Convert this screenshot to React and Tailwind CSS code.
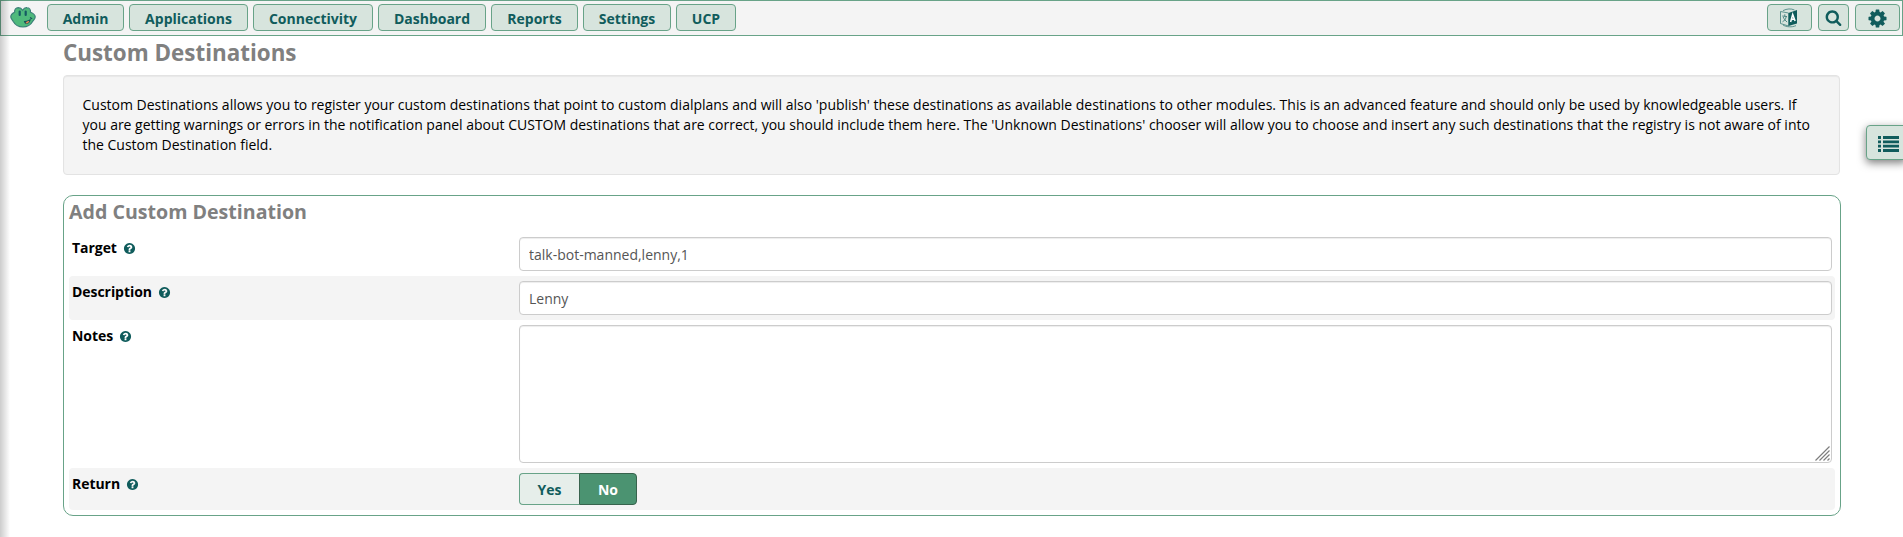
import React from "react";

const GEAR =
  "M1152 896q0-106-75-181t-181-75-181 75-75 181 75 181 181 75 181-75 75-181zm512-109v222q0 12-8 23t-20 13l-185 28q-19 54-39 91 35 50 107 138 10 12 10 25t-9 23q-27 37-99 108t-94 71q-12 0-26-9l-138-108q-44 23-91 38-16 136-29 186-7 28-36 28h-222q-14 0-24.500-8.500t-11.500-21.500l-28-184q-49-16-90-37l-141 107q-10 9-25 9-14 0-25-11-126-114-165-168-7-10-7-23 0-12 8-23 15-21 51-66.500t54-70.500q-27-50-41-99l-183-27q-13-2-21-12.500t-8-23.500v-222q0-12 8-23t19-13l186-28q14-46 39-92-40-57-107-138-10-12-10-24 0-10 9-23 26-36 98.500-107.500t94.500-71.500q13 0 26 10l138 107q44-23 91-38 16-136 29-186 7-28 36-28h222q14 0 24.500 8.500t11.500 21.500l28 184q49 16 90 37l142-107q9-9 24-9 13 0 25 10 129 119 165 170 7 8 7 22 0 12-8 23-15 21-51 66.500t-54 70.500q26 50 41 98l183 28q13 2 21 12.500t8 23.500z";
const SEARCH =
  "M1216 832q0-185-131.500-316.500t-316.500-131.500-316.500 131.500-131.500 316.500 131.500 316.500 316.500 131.500 316.500-131.500 131.500-316.500zm512 832q0 52-38 90t-90 38q-54 0-90-38l-343-342q-179 124-399 124-143 0-273.500-55.500t-225-150-150-225-55.500-273.500 55.500-273.500 150-225 225-150 273.500-55.500 273.500 55.500 225 150 150 225 55.500 273.500q0 220-124 399l343 343q37 37 37 90z";
const HELP =
  "M1024 1376v-192q0-14-9-23t-23-9h-192q-14 0-23 9t-9 23v192q0 14 9 23t23 9h192q14 0 23-9t9-23zm256-672q0-88-55.500-163t-138.500-116-170-41q-243 0-371 213-15 24 8 42l132 100q7 6 19 6 16 0 25-12 53-68 86-92 34-24 86-24 48 0 85.500 26t37.500 59q0 38-20 61t-68 45q-63 28-115.500 86.500t-52.500 125.500v36q0 14 9 23t23 9h192q14 0 23-9t9-23q0-19 21.500-49.500t54.500-49.500q32-18 49-28.500t46-35 44.500-48 28-60.500 12.500-81zm384 192q0 209-103 385.500t-279.500 279.500-385.500 103-385.500-103-279.500-279.500-103-385.500 103-385.500 279.500-279.500 385.500-103 385.500 103 279.500 279.500 103 385.500z";

function Glyph({ d, className }) {
  return (
    <svg viewBox="0 0 1792 1792" className={className} fill="currentColor" aria-hidden="true">
      <path d={d} />
    </svg>
  );
}

function Frog() {
  return (
    <svg viewBox="0 0 26 22" className="h-[22px] w-[26px]" aria-hidden="true">
      <path d="M4.600 6.300C4.300 3.300 6 1.800 8.300 1.700c2 0 3.300.9 4.400 2.600C13.800 2.300 15.300 1.500 17 1.700c2.400.2 3.700 2.200 3.500 4.600 2.500.9 4.500 2.600 4.700 4.600.1 1.900-1.700 3.100-2.600 4.600-1.700 3-5 5.500-9.600 5.500s-8.100-2.500-9.700-5.500C2.500 13.900.9 12.800.8 11 .7 8.800 2.500 7.300 4.600 6.300z" fill="#4fb97c" stroke="#3b8078" strokeWidth="1.200" />
      <path d="M9.700 5.500v3.500M15.700 5.500v3.500" stroke="#155a63" strokeWidth="2.200" strokeLinecap="round" />
      <path d="M13.800 15c3 .2 5.700-1 6.900-2.800.2 2.600-1.200 5.200-3.700 5.700-1.600.3-2.700-.9-3.200-2.900z" fill="#174f5b" />
      <path d="M15.600 17c.8-1.500 2.200-2.300 3.700-2-.5 1.700-2.300 3.100-3.700 2z" fill="#e58a54" />
      <path d="M20 11.500l2.200 1.200" stroke="#174f5b" strokeWidth="1.100" />
    </svg>
  );
}

function Language() {
  return (
    <svg viewBox="0 0 20 20" className="h-5 w-5" fill="none" stroke="#3f7d7a" aria-hidden="true">
      <path d="M9.500 5 18 2v13.500L9.500 18z" fill="#105c5c" stroke="none" />
      <path d="M9.500 5 1.500 3.500v12l8 2.500z" strokeWidth=".8" />
      <path d="M4 2.600C8 .6 12 .4 15.500 2M4 17c3 2 9 2.600 13 .6" strokeWidth=".8" />
      <path d="M3.300 8 8 8.600M5.800 6.300v2M7.300 8.500C6.700 11 5.300 13 3.500 13.800M4.200 9c.8 2 2.200 3.800 3.900 5" strokeWidth=".9" />
      <path d="m11.600 14 2.100-7.500 2.400 6.500M12.500 11.600l2.900-.7" stroke="#fff" strokeWidth="1.500" />
    </svg>
  );
}

const BTN =
  "flex h-[27px] items-center justify-center rounded-[4px] border border-[#68a388] bg-[#d7e4dd] font-bold text-[#105c5c]";

const MENU = [
  ["Admin", "w-[77px]"],
  ["Applications", "w-[119px]"],
  ["Connectivity", "w-[120px]"],
  ["Dashboard", "w-[108px]"],
  ["Reports", "w-[87px]"],
  ["Settings", "w-[88px]"],
  ["UCP", "w-[60px]"],
];

function Label({ children }) {
  return (
    <label className="mt-px flex h-5 w-[447px] shrink-0 items-center gap-[6px] font-bold tracking-[-0.05px] text-black">
      {children}
      <Glyph d={HELP} className="h-[13px] w-[13px] text-[#105c5c]" />
    </label>
  );
}

const FIELD =
  "block h-[34px] w-full rounded-[4px] border border-[#ccc] bg-white px-[9px] py-[6px] text-[14px] leading-5 text-[#555] shadow-[inset_0_1px_1px_rgba(0,0,0,0.075)] outline-none";

export default function App() {
  return (
    <div className="relative h-[537px] w-full overflow-hidden bg-white font-['Open_Sans','Noto_Sans',sans-serif] text-[14px] leading-5 text-black">
      <nav className="flex h-9 items-start border border-[#68a388] bg-[#f4f4f4] pt-[3px] pr-[2px] pl-[9px]">
        <div className="mr-[11px] mt-[2px] w-[26px]">
          <Frog />
        </div>
        <div className="flex gap-[5px]">
          {MENU.map(([name, width]) => (
            <button key={name} className={`${BTN} pt-[2px] ${width}`}>
              {name}
            </button>
          ))}
        </div>
        <div className="ml-auto flex gap-[6px]">
          <button className={`${BTN} w-[45px] pr-[2px]`} aria-label="Language">
            <Language />
          </button>
          <button className={`${BTN} w-[31px] pr-px`} aria-label="Search">
            <Glyph d={SEARCH} className="h-[17px] w-[17px]" />
          </button>
          <button className={`${BTN} w-[45px] pt-px`} aria-label="Settings menu">
            <Glyph d={GEAR} className="h-[21px] w-[21px]" />
          </button>
        </div>
      </nav>

      <main className="pr-[62px] pl-[63px]">
        <h1 className="h-[39px] pt-[3px] text-[22.4px] leading-[28px] font-bold text-[#808080]">Custom Destinations</h1>
        <section className="mr-px h-[100px] rounded-[4px] border border-[#e3e3e3] bg-[#f4f4f4] py-[19px] pr-[18px] pl-[18.5px] shadow-[inset_0_1px_1px_rgba(0,0,0,0.05)]">
          <p className="tracking-[-0.007px]">
            Custom Destinations allows you to register your custom destinations that point to custom dialplans and will also 'publish' these
            destinations as available destinations to other modules. This is an advanced feature and should only be used by knowledgeable
            users. If you are getting warnings or errors in the notification panel about CUSTOM destinations that are correct, you should
            include them here. The 'Unknown Destinations' chooser will allow you to choose and insert any such destinations that the registry
            is not aware of into the Custom Destination field.
          </p>
        </section>

        <section className="mt-5 h-[321px] rounded-[10px] border border-[#68a388] px-[5px]">
          <h2 className="h-9 pt-[2px] text-[19.6px] leading-[28px] font-bold text-[#808080]">Add Custom Destination</h2>
          <div className="flex h-11 px-[3px] pt-[5px]">
            <Label>Target</Label>
            <div className="flex-1">
              <input className={FIELD} defaultValue="talk-bot-manned,lenny,1" />
            </div>
          </div>
          <div className="flex h-11 rounded-[4px] bg-[#f4f4f4] px-[3px] pt-[5px]">
            <Label>Description</Label>
            <div className="flex-1">
              <input className={FIELD} defaultValue="Lenny" />
            </div>
          </div>
          <div className="flex h-[148px] px-[3px] pt-[5px]">
            <Label>Notes</Label>
            <div className="relative flex-1">
              <textarea className="block h-[138px] w-full resize-none rounded-[4px] border border-[#ccc] bg-white shadow-[inset_0_1px_1px_rgba(0,0,0,0.075)] outline-none" />
              <svg viewBox="0 0 15 15" className="absolute right-[2px] bottom-[7px] h-[15px] w-[15px]" stroke="#7d7d7d" strokeWidth="1.200" aria-hidden="true">
                <path d="M.5 14.500l14-14M4.500 14.500l10-10M8.500 14.500l6-6M12.500 14.500l2-2" />
              </svg>
            </div>
          </div>
          <div className="flex h-[42px] rounded-[4px] bg-[#f4f4f4] px-[3px] pt-[5px]">
            <Label>Return</Label>
            <div className="flex font-bold">
              <button className="h-8 w-[60px] rounded-l-[4px] border border-r-0 border-[#68a388] bg-[#e6eeea] pt-[2px] text-[#105c5c]">Yes</button>
              <button className="h-8 w-[58px] rounded-r-[4px] border border-[#38634d] bg-[#4b9371] pt-[2px] text-white">No</button>
            </div>
          </div>
        </section>
      </main>

      <div className="pointer-events-none absolute inset-y-0 left-0 w-[10px] bg-linear-to-r from-black/20 to-transparent" />
      <button
        aria-label="Show list"
        className="absolute top-[125px] right-[-4px] flex h-[35px] w-[41px] items-center rounded-[4px] border border-[#68a388] bg-[#d7e4dd] pt-[3px] pl-[11px] text-[#105c5c] shadow-[0_3px_9px_rgba(0,0,0,0.5)]"
      >
        <svg viewBox="0 0 21 16" className="h-4 w-[21px]" fill="currentColor" aria-hidden="true">
          <path d="M0 0h3v3H0zM5 0h16v3H5zM0 4.400h3v2.800H0zM5 4.400h16v2.800H5zM0 8.700h3v2.800H0zM5 8.700h16v2.800H5zM0 13h3v3H0zM5 13h16v3H5z" />
        </svg>
      </button>
    </div>
  );
}
